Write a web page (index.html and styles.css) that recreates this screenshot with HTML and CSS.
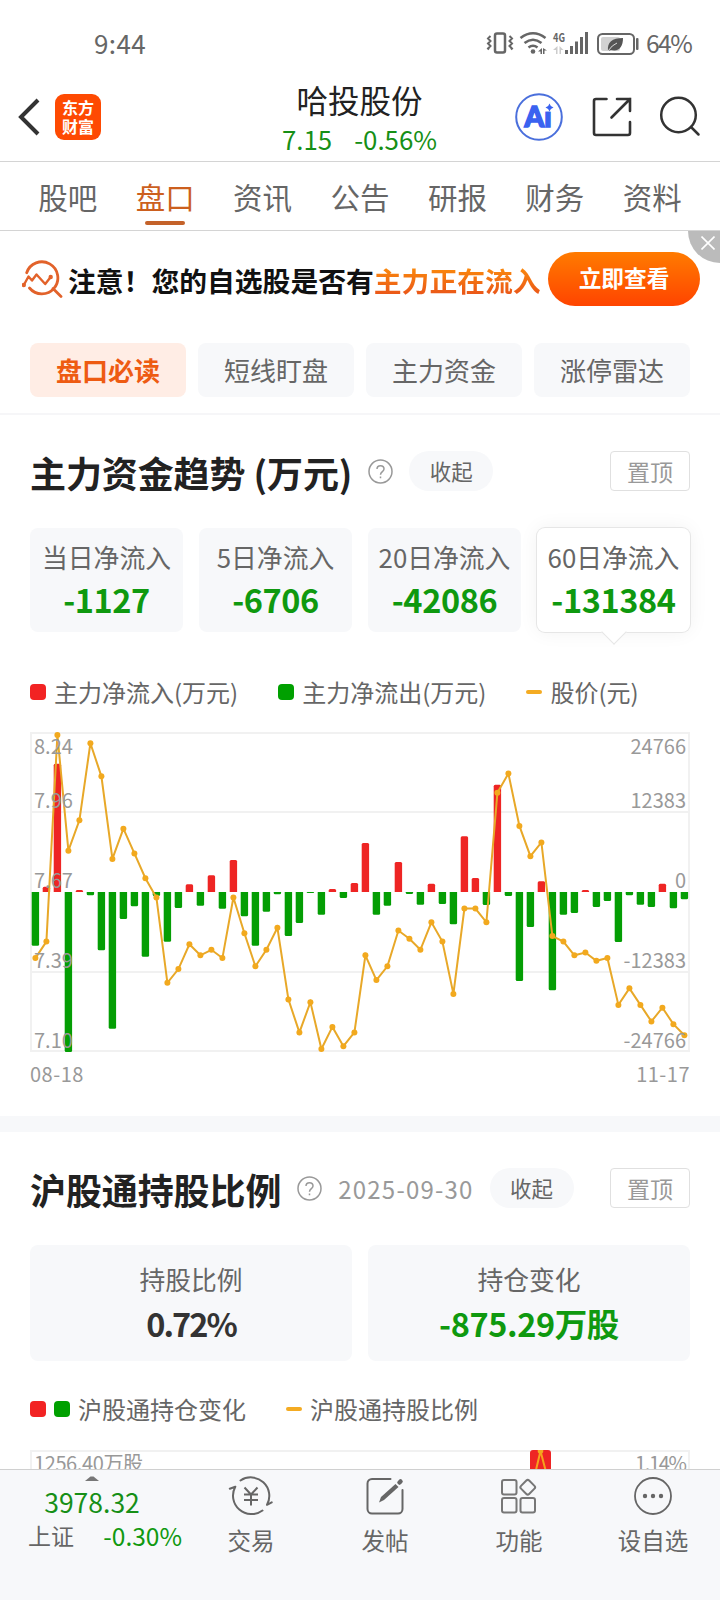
FILE: index.html
```
<!DOCTYPE html>
<html lang="zh">
<head>
  <meta charset="UTF-8">
  <meta name="viewport" content="width=device-width, initial-scale=1.0">
  <title>哈投股份 - 盘口</title>
  <link rel="stylesheet" href="styles.css">
</head>
<body>
  <div class="status-bar">
    <span class="time">9:44</span>
    <svg class="status-icons" width="160" height="30" viewBox="480 28 160 30">
      <g fill="none" stroke="#666" stroke-width="2">
        <rect x="495" y="33.500" width="10" height="19" rx="2" stroke-width="2.500"/>
        <path d="M490.500 36l-2.500 2.500 2.500 2.500-2.500 2.500 2.500 2.500-2.500 2.500 1 1M509.500 36l2.500 2.500-2.500 2.500 2.500 2.500-2.500 2.500 2.500 2.500-1 1"/>
        <path d="M520.500 38q12.500-9.500 25 0M524.500 43q8.500-6.500 17 0M528.500 47.500q4.500-3.500 9 0" stroke-width="2.600"/>
        <rect x="598" y="34" width="36" height="20" rx="4.500"/>
      </g>
      <g fill="#666">
        <circle cx="533" cy="51.500" r="2.300"/>
        <path d="M538 51.500l4-3.500v6h-1.500v-2.500zM547 50.500h-2.500v3.500h-1.500v-6z"/>
        <rect x="565" y="50" width="3" height="4"/>
        <rect x="570" y="46" width="3" height="8"/>
        <rect x="575" y="41.500" width="3" height="12.500"/>
        <rect x="580" y="37" width="3" height="17"/>
        <rect x="585" y="32" width="3" height="22"/>
        <rect x="636" y="38" width="2.500" height="12" rx="1"/>
      </g>
      <path d="M553 50l4.500-4v8h-1.500v-4zM563.500 50h-2.500v4h-1.500v-8z" fill="#ccc"/>
      <rect x="601" y="37" width="19" height="14" rx="2" fill="#d2d2d2"/>
      <path d="M608 51c-1-9 4-13 15-13 0 9-4 14-12 12z" fill="#555"/>
      <path d="M608 51q4-6 9-8" fill="none" stroke="#ddd" stroke-width="1"/>
      <text class="net" x="553" y="42" textLength="12" lengthAdjust="spacingAndGlyphs">4G</text>
    </svg>
    <span class="power">64%</span>
  </div>

  <div class="header">
    <div class="header-side">
      <svg width="22" height="40" viewBox="0 0 22 40" fill="none" stroke="#333" stroke-width="4"><path d="M20 3L3 20 20 37"/></svg>
      <div class="logo"><span>东方</span><span>财富</span></div>
    </div>
    <div class="stock">
      <div class="stock-name">哈投股份</div>
      <div class="stock-price"><span>7.15</span><span>-0.56%</span></div>
    </div>
    <div class="header-side header-actions">
      <svg width="50" height="50" viewBox="0 0 50 50">
        <text class="ai" x="10.500" y="34.500" textLength="27" lengthAdjust="spacingAndGlyphs">Ai</text>
        <rect x="30" y="9" width="13" height="10.500" fill="#fff"/>
        <circle cx="25" cy="25" r="22.800" fill="none" stroke="#4a6fdc" stroke-width="2"/>
        <path d="M35.500 11.500q.8 3.200 4 4-3.200.8-4 4-.8-3.200-4-4 3.200-.8 4-4z" fill="#3a62f0"/>
      </svg>
      <svg width="42" height="42" viewBox="0 0 42 42" fill="none" stroke="#333" stroke-width="2.600" stroke-linecap="round">
        <path d="M15.500 3H5a2 2 0 0 0-2 2v32a2 2 0 0 0 2 2h32a2 2 0 0 0 2-2V26M26 3h13v12M39 3L20.500 21.500"/>
      </svg>
      <svg width="42" height="42" viewBox="0 0 42 42" fill="none" stroke="#333" stroke-width="2.500" stroke-linecap="round">
        <circle cx="19.500" cy="19" r="17.300"/><path d="M32 31l7.500 7.500"/>
      </svg>
    </div>
  </div>

  <div class="tabs">
    <div class="tab">股吧</div>
    <div class="tab active">盘口</div>
    <div class="tab">资讯</div>
    <div class="tab">公告</div>
    <div class="tab">研报</div>
    <div class="tab">财务</div>
    <div class="tab">资料</div>
  </div>

  <div class="content">
    <div class="banner">
      <svg width="42" height="40" viewBox="0 0 42 40" fill="none" stroke="#e2622a" stroke-width="2.800" stroke-linecap="round" stroke-linejoin="round">
        <path d="M4.700 13.700A16 16 0 1 1 7.500 29M31 29.500l8 8"/>
        <path d="M1.800 26l4.700-8.500 3.500 4 4.500-6 8.700 9.500 5.500-7" stroke-width="2.400"/>
        <circle cx="1.800" cy="26" r=".8"/><circle cx="28.700" cy="18" r=".8"/>
      </svg>
      <div class="banner-text">注意！您的自选股是否有<span>主力正在流入</span></div>
      <div class="banner-btn">立即查看</div>
      <div class="banner-close">
        <svg width="14" height="14" viewBox="0 0 14 14" stroke="#fff" stroke-width="1.600"><path d="M.5.5l13 13M13.500.5l-13 13"/></svg>
      </div>
    </div>

    <div class="pills">
      <div class="pill active">盘口必读</div>
      <div class="pill">短线盯盘</div>
      <div class="pill">主力资金</div>
      <div class="pill">涨停雷达</div>
    </div>

    <div class="section">
      <div class="section-head">
        <h2>主力资金趋势 (万元)</h2>
        <svg class="help" width="25" height="25" viewBox="0 0 25 25" fill="none" stroke="#999" stroke-width="1.500">
          <circle cx="12.500" cy="12.500" r="11.500"/><path d="M9 10c0-4.500 7-4.500 7 0 0 2.500-3.500 2.700-3.500 5.800M12.500 17.500v1.800"/>
        </svg>
        <div class="fold">收起</div>
        <div class="pin">置顶</div>
      </div>

      <div class="cards">
        <div class="card"><div class="label">当日净流入</div><div class="value down">-1127</div></div>
        <div class="card"><div class="label">5日净流入</div><div class="value down">-6706</div></div>
        <div class="card"><div class="label">20日净流入</div><div class="value down">-42086</div></div>
        <div class="card active"><div class="label">60日净流入</div><div class="value down">-131384</div></div>
      </div>

      <div class="legend">
        <div class="legend-item"><i class="dot red"></i>主力净流入(万元)</div>
        <div class="legend-item"><i class="dot green"></i>主力净流出(万元)</div>
        <div class="legend-item"><i class="dash"></i>股价(元)</div>
      </div>

      <svg class="chart" width="660" height="320" viewBox="0 0 660 320">
        <g fill="none" stroke="#f1f1f1" stroke-width="2">
          <rect x="1" y="1" width="658" height="318"/>
          <path d="M0 80h660M0 240h660"/>
        </g>
        <g id="bars"></g>
        <polyline id="priceLine" fill="none" stroke="#e8a828" stroke-width="2"/>
        <g id="priceDots" fill="#f2a91e"></g>
        <g class="axis">
          <text x="4" y="22">8.24</text>
          <text x="4" y="76">7.96</text>
          <text x="4" y="156">7.67</text>
          <text x="4" y="236">7.39</text>
          <text x="4" y="316">7.10</text>
        </g>
        <g class="axis" text-anchor="end">
          <text x="656" y="22">24766</text>
          <text x="656" y="76">12383</text>
          <text x="656" y="156">0</text>
          <text x="656" y="236">-12383</text>
          <text x="656" y="316">-24766</text>
        </g>
      </svg>
      <div class="dates"><span>08-18</span><span>11-17</span></div>
    </div>

    <div class="section second">
      <div class="section-head">
        <h2>沪股通持股比例</h2>
        <svg class="help" width="25" height="25" viewBox="0 0 25 25" fill="none" stroke="#999" stroke-width="1.500">
          <circle cx="12.500" cy="12.500" r="11.500"/><path d="M9 10c0-4.500 7-4.500 7 0 0 2.500-3.500 2.700-3.500 5.800M12.500 17.500v1.800"/>
        </svg>
        <span class="date">2025-09-30</span>
        <div class="fold">收起</div>
        <div class="pin">置顶</div>
      </div>

      <div class="cards large">
        <div class="card"><div class="label">持股比例</div><div class="value ratio">0.72%</div></div>
        <div class="card"><div class="label">持仓变化</div><div class="value down">-875.29万股</div></div>
      </div>

      <div class="legend">
        <div class="legend-item"><i class="dot red"></i><i class="dot green"></i>沪股通持仓变化</div>
        <div class="legend-item"><i class="dash"></i>沪股通持股比例</div>
      </div>

      <svg class="chart" width="660" height="320" viewBox="0 0 660 320">
        <rect x="1" y="1" width="658" height="318" fill="none" stroke="#f1f1f1" stroke-width="2"/>
        <rect x="500" y="0" width="21" height="160" rx="3" fill="#ee2524"/>
        <path d="M506 20L510.500 1 515.500 20" fill="none" stroke="#f5a31c" stroke-width="2"/>
        <circle cx="510.500" cy="1" r="2.800" fill="#f2a91e"/>
        <text class="axis" x="4" y="20.500" textLength="109">1256.40万股</text>
        <text class="axis" x="657" y="20.500" text-anchor="end" textLength="52">1.14%</text>
      </svg>
    </div>
  </div>

  <div class="toolbar">
    <div class="index">
      <svg width="14" height="5" viewBox="0 0 14 5"><path d="M0 5l5.500-4.500h3L14 5z" fill="#777"/></svg>
      <div class="index-value">3978.32</div>
      <div class="index-row"><span>上证</span><span class="down">-0.30%</span></div>
    </div>
    <div class="tool">
      <svg width="46" height="40" viewBox="0 0 46 40" fill="none" stroke="#666" stroke-width="2" stroke-linecap="round" stroke-linejoin="round">
        <path d="M12.500 4.500A18.500 18.500 0 0 1 39 28.800L43.700 26.300"/>
        <path d="M34.500 34.500A18.500 18.500 0 0 1 7.300 10.700L1.800 12.700"/>
        <path d="M16.500 11.500l6.500 7 6.500-7M23 18.500V29.500M16 18.500h14M16 24h14" stroke-linecap="butt"/>
      </svg>
      <span>交易</span>
    </div>
    <div class="tool">
      <svg width="40" height="40" viewBox="0 0 40 40" fill="none" stroke="#666" stroke-width="2" stroke-linecap="round">
        <path d="M25.500 3H7a4.500 4.500 0 0 0-4.500 4.500V33A4.500 4.500 0 0 0 7 37.500h26a4.500 4.500 0 0 0 4.500-4.500V14"/>
        <path d="M14 26.500l2-5.500L30.500 8l3 3L19 24z" fill="#666" stroke="none"/>
        <path d="M34.500 6.500l1-1" stroke-width="4.500"/>
      </svg>
      <span>发帖</span>
    </div>
    <div class="tool">
      <svg width="40" height="40" viewBox="0 0 40 40" fill="none" stroke="#777" stroke-width="2">
        <rect x="3" y="4" width="14.500" height="14.500" rx="2"/>
        <rect x="3" y="22" width="14.500" height="14.500" rx="2"/>
        <rect x="21.500" y="22" width="14.500" height="14.500" rx="2"/>
        <rect x="23" y="5.500" width="11.500" height="11.500" rx="2" transform="rotate(45 28.750 11.250)"/>
      </svg>
      <span>功能</span>
    </div>
    <div class="tool">
      <svg width="40" height="40" viewBox="0 0 40 40" fill="none" stroke="#666" stroke-width="1.800">
        <circle cx="20" cy="20" r="18"/>
        <g fill="#666" stroke="none"><circle cx="12" cy="20" r="2.200"/><circle cx="20" cy="20" r="2.200"/><circle cx="28" cy="20" r="2.200"/></g>
      </svg>
      <span>设自选</span>
    </div>
  </div>

  <script>
    const flows = [-8310, 820, 19860, -24766, 310, -510, -9020, -21160, -4180, -2210,
      -10010, -620, -7690, -2480, 1190, -2120, 2580, -2580, 4950, -3760,
      -8310, -3050, -360, -6810, -4800, -150, -3510, 460, -930, 1390,
      7580, -3510, -2120, 4640, -310, -1970, 1280, -1860, -5000, 8620,
      2170, -2010, 16610, -620, -13780, -5420, 1660, -15220, -3510, -3250,
      310, -2320, -1390, -7740, -510, -1970, -2320, 1280, -2520, -1127];
    const prices = [7.43, 7.49, 8.24, 7.82, 7.93, 8.21, 8.09, 7.79, 7.90, 7.81,
      7.72, 7.65, 7.34, 7.39, 7.48, 7.44, 7.46, 7.43, 7.65, 7.52,
      7.40, 7.46, 7.54, 7.28, 7.16, 7.27, 7.10, 7.18, 7.11, 7.16,
      7.44, 7.35, 7.40, 7.53, 7.50, 7.46, 7.56, 7.49, 7.30, 7.61,
      7.61, 7.56, 8.03, 8.10, 7.91, 7.80, 7.85, 7.51, 7.49, 7.44,
      7.45, 7.42, 7.43, 7.26, 7.32, 7.26, 7.20, 7.25, 7.19, 7.15];

    const x = i => 5.4 + i * 11;
    const priceY = p => 3 + (8.24 - p) * 275.4;

    // bars grow from the zero line, only the outer corners are round
    document.getElementById("bars").innerHTML = flows.map((v, i) => {
      const h = v / 24766 * 160;
      const r = Math.min(1.5, Math.abs(h)) * Math.sign(h);
      const c = Math.abs(r);
      const color = v > 0 ? "#ee2524" : "#049e04";
      return `<path fill="${color}" d="M${x(i) - 3.7} 160v${-h + r}q0 ${-r} ${c} ${-r}h${7.4 - 2 * c}q${c} 0 ${c} ${r}v${h - r}z"/>`;
    }).join("");

    document.getElementById("priceLine").setAttribute("points", prices.map((p, i) => x(i) + "," + priceY(p)).join(" "));
    document.getElementById("priceDots").innerHTML = prices.map((p, i) => `<circle cx="${x(i)}" cy="${priceY(p)}" r="3"/>`).join("");
  </script>
</body>
</html>
```
FILE: styles.css
```
* {
  box-sizing: border-box;
}
body {
  font-family: "Noto Sans CJK SC", sans-serif;
  width: 720px;
  height: 1600px;
  margin: 0;
  background: #fff;
  color: #666;
  line-height: 1;
  display: flex;
  flex-direction: column;
  overflow: hidden;
}
svg {
  display: block;
  flex: none;
}
.down {
  color: #0f990f;
}

/* status bar */
.status-bar {
  height: 80px;
  padding: 6px 29px 0 94px;
  display: flex;
  align-items: center;
}
.time {
  font-size: 26px;
  letter-spacing: 0.4px;
  flex: 1;
}
.status-icons {
  margin-right: 6px;
}
.power {
  font-size: 24.500px;
  letter-spacing: -1.5px;
  width: 45px;
}
.net {
  font-size: 12px;
  font-weight: bold;
  fill: #666;
}

/* header */
.header {
  height: 82px;
  padding: 0 19px 0 18px;
  display: flex;
  justify-content: space-between;
  border-bottom: 1px solid #d4d4d4;
}
.header-side {
  width: 187px;
  height: 74px;
  display: flex;
  align-items: center;
  gap: 15px;
}
.logo {
  width: 46px;
  height: 46px;
  border-radius: 9px;
  background: #fe4a02;
  color: #fff;
  font-size: 16px;
  font-weight: bold;
  display: flex;
  flex-direction: column;
  align-items: center;
  justify-content: center;
  gap: 3px;
  padding-bottom: 2px;
}
.stock {
  text-align: center;
}
.stock-name {
  font-size: 31.500px;
  color: #222;
  margin-top: 4px;
}
.stock-price {
  font-size: 25.800px;
  color: #168f16;
  display: flex;
  justify-content: center;
  gap: 22px;
  margin-top: 10px;
}
.header-actions {
  justify-content: space-between;
  gap: 0;
}
.ai {
  font-family: Lato, sans-serif;
  font-size: 28px;
  font-weight: 900;
  fill: #3a62f0;
  stroke: #3a62f0;
  stroke-width: 1.500;
}

/* tabs */
.tabs {
  height: 69px;
  padding: 0 19px;
  display: flex;
  border-bottom: 1px solid #d4d4d4;
}
.tab {
  flex: 1;
  font-size: 29.500px;
  text-align: center;
  padding-top: 20px;
}
.tab.active {
  color: #cc5f1e;
}
.tab.active::after {
  content: "";
  display: block;
  width: 40px;
  height: 4px;
  border-radius: 2px;
  background: #c4622a;
  margin: 9.500px auto 0;
}

.content {
  flex: 1;
  overflow: hidden;
}

/* banner */
.banner {
  position: relative;
  height: 98px;
  padding: 0 20px 2px 22px;
  display: flex;
  align-items: center;
}
.banner-text {
  font-size: 27.800px;
  font-weight: bold;
  color: #111;
  margin-left: 4px;
  padding-top: 4px;
  white-space: nowrap;
}
.banner-text span {
  background: linear-gradient(#fb8c0c 15%, #e8501a 95%);
  -webkit-background-clip: text;
  background-clip: text;
  color: transparent;
}
.banner-btn {
  width: 152px;
  height: 54px;
  margin-left: auto;
  border-radius: 27px;
  background: linear-gradient(#ff7b00, #ff4400);
  color: #fff;
  font-size: 22.700px;
  font-weight: bold;
  line-height: 51px;
  text-align: center;
}
.banner-close {
  position: absolute;
  top: 0;
  right: 0;
  width: 32px;
  height: 32px;
  border-bottom-left-radius: 32px;
  background: #bbb;
  padding: 5px 0 0 13px;
}

/* pills */
.pills {
  height: 86px;
  padding: 14px 30px 0;
  display: flex;
  gap: 12px;
  border-bottom: 2px solid #f6f6f8;
}
.pill {
  flex: 1;
  height: 54px;
  border-radius: 8px;
  background: #f7f8fa;
  font-size: 26px;
  line-height: 54px;
  text-align: center;
}
.pill.active {
  background: #ffede5;
  color: #ee5b12;
  font-weight: bold;
}

/* sections */
.section {
  padding: 36px 30px 0;
  height: 701px;
}
.section.second {
  border-top: 16px solid #f7f8fa;
  height: auto;
}
.section-head {
  height: 40px;
  display: flex;
  align-items: center;
}
h2 {
  margin: 0;
  padding-top: 2px;
  font-size: 36px;
  font-weight: bold;
  letter-spacing: -0.1px;
  color: #222;
  white-space: nowrap;
}
.help {
  margin: 0 16px;
}
.date {
  font-size: 24px;
  letter-spacing: 1.200px;
  color: #999;
  padding-top: 2px;
  margin-right: 16px;
}
.fold {
  width: 84px;
  height: 40px;
  border-radius: 20px;
  background: #f7f8fa;
  font-size: 21.500px;
  line-height: 40px;
  text-align: center;
}
.pin {
  width: 80px;
  height: 40px;
  margin-left: auto;
  border: 1px solid #e0e0e0;
  border-radius: 4px;
  color: #999;
  font-size: 23px;
  line-height: 38px;
  text-align: center;
}

/* cards */
.cards {
  display: grid;
  grid-template-columns: repeat(4, 1fr);
  gap: 16px;
  margin-top: 37px;
}
.card {
  position: relative;
  height: 104px;
  border-radius: 8px;
  background: #f7f8fa;
  text-align: center;
  padding-top: 16px;
  white-space: nowrap;
}
.card .label {
  font-size: 25.800px;
}
.card .value {
  font-size: 32.500px;
  font-weight: bold;
  letter-spacing: -0.4px;
  margin-top: 13px;
}
.card .ratio {
  color: #333;
  letter-spacing: -2px;
}
.card.active {
  background: #fff;
  box-shadow: 0 0 0 1px #e6e6e6, 0 0 20px rgba(0,0,0,0.06);
}
.card.active::after {
  content: "";
  position: absolute;
  left: 50%;
  bottom: -9px;
  width: 17px;
  height: 17px;
  margin-left: -9px;
  background: #fff;
  border: solid #e6e6e6;
  border-width: 0 1px 1px 0;
  transform: rotate(45deg);
}
.cards.large {
  grid-template-columns: repeat(2, 1fr);
}
.large .card {
  height: 116px;
  padding-top: 21px;
}
.large .card .value {
  margin-top: 15px;
}

/* legend */
.legend {
  display: flex;
  gap: 40px;
  height: 24px;
  margin-top: 48px;
  font-size: 24px;
}
.large + .legend {
  margin-top: 36px;
}
.legend-item {
  display: flex;
  align-items: center;
  white-space: nowrap;
}
.dot {
  width: 16px;
  height: 16px;
  border-radius: 4px;
  margin-right: 8px;
}
.red {
  background: #f22323;
}
.green {
  background: #00a000;
}
.dash {
  width: 16px;
  height: 4px;
  border-radius: 2px;
  background: #f4ab22;
  margin-right: 8px;
}

/* chart */
.chart {
  margin-top: 28px;
}
.large ~ .chart {
  margin-top: 29px;
}
.axis {
  font-size: 20px;
  fill: #999;
}
.dates {
  display: flex;
  justify-content: space-between;
  margin-top: 12px;
  font-size: 20px;
  letter-spacing: 0.5px;
  color: #999;
}

/* toolbar */
.toolbar {
  height: 131px;
  background: #f7f8fa;
  border-top: 1px solid #d0d0d0;
  display: flex;
}
.index {
  width: 184px;
  display: flex;
  flex-direction: column;
  align-items: center;
  padding-top: 6px;
}
.index-value {
  font-size: 26.500px;
  color: #168f16;
  margin-top: 8px;
}
.index-row {
  width: 154px;
  display: flex;
  justify-content: space-between;
  align-items: center;
  font-size: 23px;
  margin: 8px 0 0 26px;
}
.index-row .down {
  font-size: 24.500px;
}
.tool {
  width: 134px;
  display: flex;
  flex-direction: column;
  align-items: center;
  padding-top: 6px;
  font-size: 23.500px;
}
.tool span {
  margin-top: 13px;
}
```
